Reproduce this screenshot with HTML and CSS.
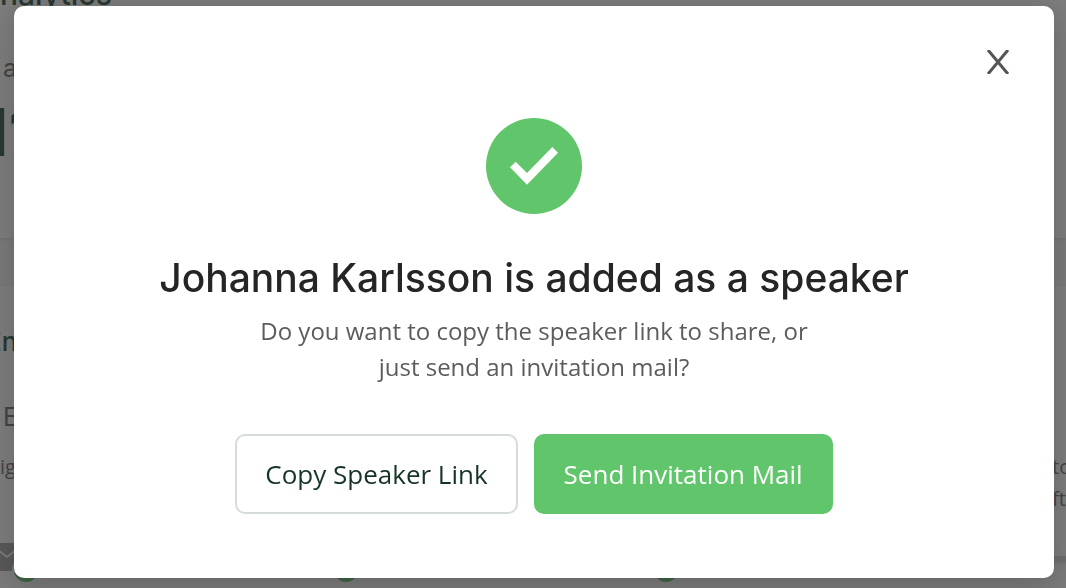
FILE: index.html
```
<!DOCTYPE html>
<html lang="en">
<head>
    <meta charset="UTF-8">
    <meta name="viewport" content="width=device-width, initial-scale=1.0">
    <title>Speaker added</title>
    <link rel="stylesheet" href="styles.css">
</head>
<body>
    <div class="page" aria-hidden="true">
        <section class="panel summary">
            <h2 class="page-title">nalytics</h2>
            <p class="label">a</p>
            <p class="figure">I<span>1</span></p>
        </section>

        <section class="panel details">
            <h3>En</h3>
            <p class="label">E</p>
            <div class="notes">
                <p>ig</p>
                <p class="note-end">to<br>ft</p>
            </div>
            <svg class="mail" width="28" height="28" viewBox="0 0 28 28">
                <path fill="#b2b2b2" d="M0 0h28v12c-5 3-9 8-9 16H0z"/>
                <path fill="none" stroke="#f4f4f4" stroke-width="2" d="M0 3l14 11 14-11"/>
            </svg>
        </section>

        <div class="steps">
            <span></span>
            <span></span>
            <span></span>
        </div>
    </div>

    <div class="overlay">
        <div class="modal" role="dialog" aria-modal="true" aria-labelledby="modal-title">
            <button class="close" type="button" aria-label="Close">
                <svg width="24" height="24" viewBox="0 0 24 24">
                    <path fill="none" stroke="#555" stroke-width="3" d="M2 0l20 24M22 0L2 24"/>
                </svg>
            </button>

            <svg class="check" width="96" height="96" viewBox="0 0 96 96">
                <circle cx="48" cy="48" r="48" fill="#61c56b"/>
                <path fill="#fff" d="M24 49.3l5.7-5.6L41 55l25.3-26 5.7 5.7-31 32z"/>
            </svg>

            <h1 id="modal-title">Johanna Karlsson is added as a speaker</h1>
            <p class="message">Do you want to copy the speaker link to share, or just send an invitation mail?</p>

            <div class="actions">
                <button class="btn btn-outline" type="button">Copy Speaker Link</button>
                <button class="btn btn-primary" type="button">Send Invitation Mail</button>
            </div>
        </div>
    </div>
</body>
</html>
```

FILE: styles.css
```
* {
    margin: 0;
    padding: 0;
    box-sizing: border-box;
}

body {
    font-family: "Open Sans", sans-serif;
    background-color: #f4f4f4;
    color: #252525;
}

/* page behind the dialog */
.page {
    height: 100vh;
    overflow: hidden;
}

.panel {
    background-color: #fafafa;
    box-shadow: 0 1px 3px rgba(0, 0, 0, 0.1);
}

.summary {
    height: 238px;
    margin-bottom: 48px;
    overflow: hidden;
}

.page-title {
    margin-top: -24px;
    font-family: Inter, sans-serif;
    font-size: 30px;
    font-weight: 500;
    line-height: 36px;
    color: #50705f;
}

.label {
    padding-left: 3px;
    font-family: Inter, sans-serif;
    font-size: 25px;
    line-height: 32px;
    color: #888;
}

.summary .label {
    margin-top: 40px;
}

.figure {
    display: flex;
    margin: 16px 0 0 -10px;
    font-family: Inter, sans-serif;
    font-size: 66px;
    font-weight: 700;
    line-height: 64px;
    color: #50705f;
}

.details {
    height: 276px;
    padding-top: 40px;
    border-bottom: 6px solid #dcdcdc;
}

.details h3 {
    margin-left: -14px;
    font-family: Inter, sans-serif;
    font-size: 26px;
    font-weight: 500;
    line-height: 32px;
    color: #50705f;
}

.details .label {
    margin-top: 43px;
}

.notes {
    display: flex;
    justify-content: space-between;
    margin-top: 18px;
    font-size: 20px;
    line-height: 32px;
    color: #888;
}

.note-end {
    width: 14px;
}

.mail {
    display: block;
    margin: 28px 0 0 -7px;
}

.steps {
    display: flex;
    gap: 296px;
    padding-left: 14px;
}

.steps span {
    flex: none;
    width: 24px;
    height: 20px;
    border-radius: 0 0 12px 12px;
    background-color: #7cc585;
}

/* dialog */
.overlay {
    position: fixed;
    inset: 0;
    display: flex;
    padding: 6px 12px 10px 14px;
    background-color: rgba(0, 0, 0, 0.5);
}

.modal {
    position: relative;
    flex: 1;
    display: flex;
    flex-direction: column;
    align-items: center;
    padding: 112px 24px 64px;
    border-radius: 10px;
    background-color: #fff;
    box-shadow: 0 4px 32px rgba(0, 0, 0, 0.2);
    text-align: center;
}

.close {
    position: absolute;
    top: 44px;
    right: 44px;
    border: none;
    background: none;
    cursor: pointer;
}

.close svg,
.check {
    display: block;
}

.modal h1 {
    margin-top: 40px;
    font-family: Inter, sans-serif;
    font-size: 39px;
    font-weight: 500;
    line-height: 48px;
}

.message {
    max-width: 560px;
    margin-top: 11px;
    font-size: 24px;
    line-height: 36px;
    color: #5c5c5c;
}

.actions {
    display: flex;
    gap: 16px;
    margin-top: 49px;
}

.btn {
    height: 80px;
    padding: 0 28px;
    border: 2px solid #61c56b;
    border-radius: 10px;
    font-family: inherit;
    font-size: 26px;
    cursor: pointer;
}

.btn-outline {
    border-color: #d5dcd9;
    background-color: #fff;
    color: #173526;
}

.btn-primary {
    background-color: #61c56b;
    color: #fff;
}
```
